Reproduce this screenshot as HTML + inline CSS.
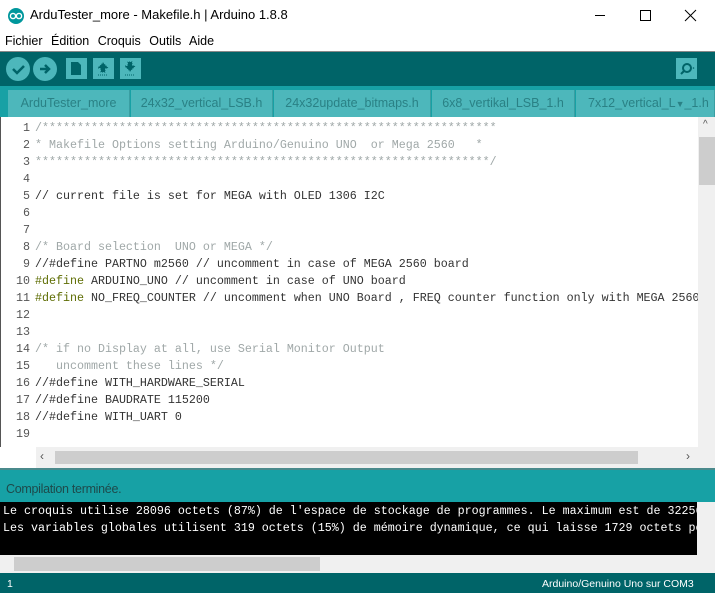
<!DOCTYPE html>
<html><head><meta charset="utf-8"><style>
*{margin:0;padding:0;box-sizing:border-box}
body{width:715px;height:593px;overflow:hidden;background:#fff;font-family:"Liberation Sans",sans-serif;position:relative}
.abs{position:absolute}
.title{left:0;top:0;width:715px;height:31px;background:#fff;font-size:13px;color:#000}
.menu{left:0;top:31px;width:715px;height:20px;font-size:12.5px}
.menu span{margin-right:5px}
.tb{left:0;top:51px;width:715px;height:35px;background:#006468;border-top:1px solid #888}
.tabs{left:0;top:86px;width:715px;height:31px;background:#17a1a5}
.tab{position:absolute;top:4px;height:27px;background:#4db7bb;color:#2a8185;font-size:12.5px;line-height:27px;text-align:center;border-right:1px solid #3a9ea2}
.ed{left:0;top:117px;width:715px;height:330px;background:#fff;border-left:1px solid #555;overflow:hidden}
.code{position:absolute;left:0;top:3px;font-family:"Liberation Mono",monospace;font-size:11.67px;line-height:17px;white-space:pre;color:#333}
.ln{display:inline-block;width:34px;text-align:right;color:#555;padding-right:5px}
.c{color:#a0a8a8}.k{color:#5e6d03}
.btn{position:absolute;background:#4db7bb}
</style></head><body>
<div class="abs title">
<svg class="abs" style="left:8px;top:8px" width="16" height="16"><circle cx="8" cy="8" r="8" fill="#00979c"/><circle cx="5" cy="8" r="2.6" fill="none" stroke="#fff" stroke-width="1.4"/><circle cx="11" cy="8" r="2.6" fill="none" stroke="#fff" stroke-width="1.4"/></svg>
<span class="abs" style="left:30px;top:7px">ArduTester_more - Makefile.h | Arduino 1.8.8</span>
<svg class="abs" style="left:590px;top:8px" width="120" height="16"><line x1="5" y1="7.5" x2="15" y2="7.5" stroke="#000"/><rect x="50.5" y="2.5" width="10" height="10" fill="none" stroke="#000"/><path d="M95 2L106 13M106 2L95 13" stroke="#000"/></svg>
</div>
<div class="abs menu"><span style="position:absolute;left:5px;top:3px"><span>Fichier</span> <span>Édition</span> <span>Croquis</span> <span>Outils</span> <span>Aide</span></span></div>
<div class="abs tb">
<div class="btn" style="left:6px;top:5px;width:24px;height:24px;border-radius:50%"></div>
<div class="btn" style="left:33px;top:5px;width:24px;height:24px;border-radius:50%"></div>
<svg class="abs" style="left:6px;top:5px" width="60" height="24"><path d="M7 12l4 4 7-7" stroke="#006468" stroke-width="2.5" fill="none"/><path d="M34 12h9M39 8l4 4-4 4" stroke="#006468" stroke-width="2.5" fill="none"/></svg>
<div class="btn" style="left:66px;top:6px;width:21px;height:21px"></div>
<div class="btn" style="left:93px;top:6px;width:21px;height:21px"></div>
<div class="btn" style="left:120px;top:6px;width:21px;height:21px"></div>
<svg class="abs" style="left:66px;top:6px" width="80" height="21"><path d="M5 4h7l3 3v10H5z" fill="#006468"/><path d="M37 5l5 5h-3v4h-4v-4h-3z M32 17h10" fill="#006468" stroke="#006468" stroke-width="1" stroke-dasharray="1 1"/><path d="M64 13l5-5h-3V4h-4v4h-3z M59 17h10" fill="#006468" stroke="#006468" stroke-width="1" stroke-dasharray="1 1"/></svg>
<div class="btn" style="left:676px;top:6px;width:21px;height:21px"></div>
<svg class="abs" style="left:676px;top:6px" width="21" height="21"><circle cx="11" cy="10" r="4" fill="none" stroke="#006468" stroke-width="2"/><path d="M8 13l-3 3" stroke="#006468" stroke-width="2"/><circle cx="17.5" cy="10" r="0.8" fill="#006468"/></svg>
</div>
<div class="abs tabs">
<div class="tab" style="left:8px;width:122px">ArduTester_more</div>
<div class="tab" style="left:131px;width:142px">24x32_vertical_LSB.h</div>
<div class="tab" style="left:274px;width:157px">24x32update_bitmaps.h</div>
<div class="tab" style="left:432px;width:143px">6x8_vertikal_LSB_1.h</div>
<div class="tab" style="left:576px;width:139px;text-align:left;padding-left:12px">7x12_vertical_L<span style="font-size:9px">▼</span>_1.h</div>
</div>
<div class="abs ed">
<div class="code"><span class="ln">1</span><span class="c">/*****************************************************************</span>
<span class="ln">2</span><span class="c">* Makefile Options setting Arduino/Genuino UNO  or Mega 2560   *</span>
<span class="ln">3</span><span class="c">*****************************************************************/</span>
<span class="ln">4</span>
<span class="ln">5</span>// current file is set for MEGA with OLED 1306 I2C
<span class="ln">6</span>
<span class="ln">7</span>
<span class="ln">8</span><span class="c">/* Board selection  UNO or MEGA */</span>
<span class="ln">9</span>//#define PARTNO m2560 // uncomment in case of MEGA 2560 board
<span class="ln">10</span><span class="k">#define</span> ARDUINO_UNO // uncomment in case of UNO board
<span class="ln">11</span><span class="k">#define</span> NO_FREQ_COUNTER // uncomment when UNO Board , FREQ counter function only with MEGA 2560
<span class="ln">12</span>
<span class="ln">13</span>
<span class="ln">14</span><span class="c">/* if no Display at all, use Serial Monitor Output</span>
<span class="ln">15</span><span class="c">   uncomment these lines */</span>
<span class="ln">16</span>//#define WITH_HARDWARE_SERIAL
<span class="ln">17</span>//#define BAUDRATE 115200
<span class="ln">18</span>//#define WITH_UART 0
<span class="ln">19</span></div>
<div class="abs" style="left:697px;top:0;width:18px;height:330px;background:#f0f0f0"></div>
<div class="abs" style="left:698px;top:20px;width:16px;height:48px;background:#cdcdcd"></div>
<div class="abs" style="left:702px;top:2px;font-size:10px;color:#555">^</div>
</div>
<div class="abs" style="left:36px;top:447px;width:679px;height:21px;background:#f0f0f0"></div>
<div class="abs" style="left:55px;top:451px;width:583px;height:13px;background:#cdcdcd"></div>
<div class="abs" style="left:40px;top:449px;font-size:12px;color:#555">‹</div>
<div class="abs" style="left:686px;top:449px;font-size:12px;color:#555">›</div>
<div class="abs" style="left:0;top:468px;width:715px;height:34px;background:#17a1a5;border-top:2px solid #4a8a8c"></div>
<div class="abs" style="left:6px;top:482px;font-size:12.5px;color:#1e4a4b;letter-spacing:-0.3px">Compilation terminée.</div>
<div class="abs" style="left:0;top:502px;width:715px;height:53px;background:#000;font-family:'Liberation Mono',monospace;font-size:11.67px;line-height:17px;color:#fff;white-space:pre;overflow:hidden;padding-left:3px;padding-top:1px">Le croquis utilise 28096 octets (87%) de l'espace de stockage de programmes. Le maximum est de 32256
Les variables globales utilisent 319 octets (15%) de mémoire dynamique, ce qui laisse 1729 octets pour</div>
<div class="abs" style="left:697px;top:502px;width:18px;height:53px;background:#f0f0f0"></div>
<div class="abs" style="left:0;top:555px;width:715px;height:18px;background:#f0f0f0"></div>
<div class="abs" style="left:14px;top:557px;width:306px;height:14px;background:#cdcdcd"></div>
<div class="abs" style="left:0;top:573px;width:715px;height:20px;background:#006468;color:#fff;font-size:10.5px"><span style="position:absolute;left:7px;top:5px">1</span><span style="position:absolute;left:542px;top:5px">Arduino/Genuino Uno sur COM3</span></div>
</body></html>
